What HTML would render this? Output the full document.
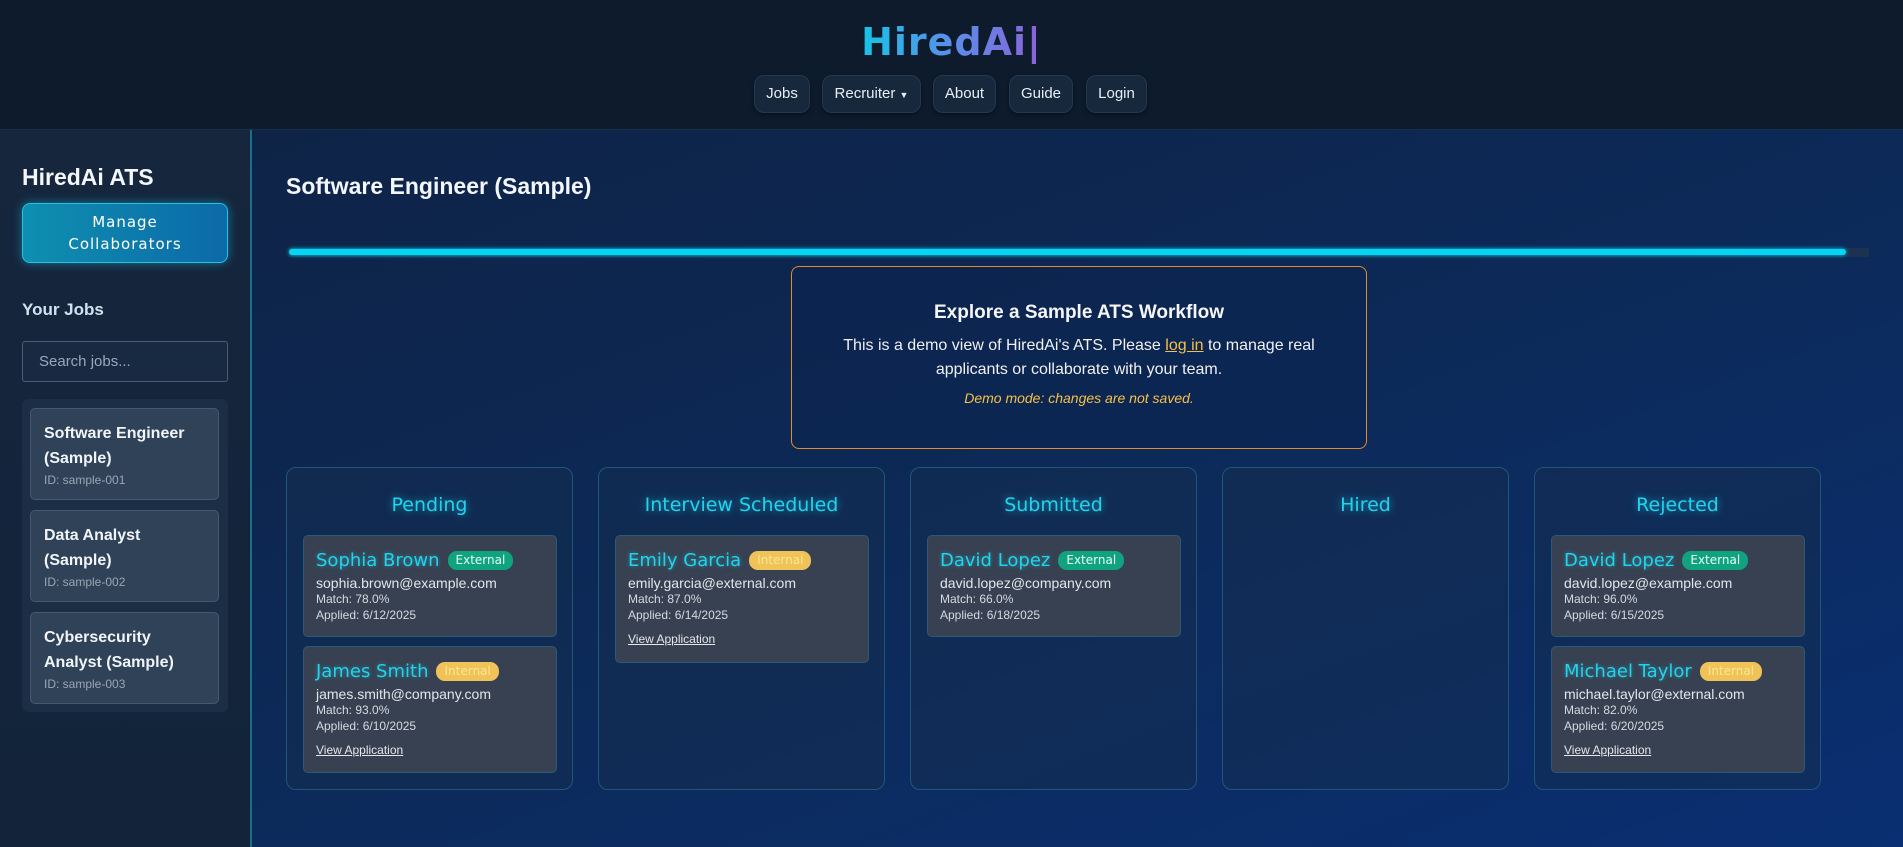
<!DOCTYPE html>
<html><head><meta charset="utf-8"><style>
*{box-sizing:border-box;margin:0;padding:0}
body{width:1903px;height:847px;overflow:hidden;font-family:"Liberation Sans",sans-serif;background:linear-gradient(160deg,#0f2140 0%,#0c2a5a 60%,#0a2f72 100%);position:relative;color:#fff}
.abs{position:absolute}
header{position:absolute;left:0;top:0;width:1903px;height:130px;background:#0d1b2d;border-bottom:1px solid #16304a}
.logo{position:absolute;left:0;width:1903px;top:20px;text-align:center;font-family:"DejaVu Sans",sans-serif;font-size:38px;font-weight:bold;letter-spacing:1px}
.logo span{background:linear-gradient(90deg,#17c3e6,#5b8ee8,#8b62d9);-webkit-background-clip:text;background-clip:text;color:transparent}
.nav{position:absolute;top:75px;height:38px;background:#17283d;border:1px solid #24384f;border-radius:10px;color:#e6eef6;font-size:15px;line-height:36px;text-align:center;box-shadow:0 2px 4px rgba(0,0,0,.4)}
.side{position:absolute;left:0;top:130px;width:252px;height:717px;background:linear-gradient(180deg,#15263d,#12233a);border-right:2px solid #1b6f8a}
.orb{font-family:"DejaVu Sans",sans-serif}
.jc{position:absolute;left:30px;width:189px;height:92px;background:#2f4258;border:1px solid #46586c;border-radius:5px;padding:12px 13px}
.jc b{display:block;font-size:16px;line-height:25px;color:#f1f5f9}
.jc i{font-style:normal;font-size:12px;color:#9aa6b4;display:block;margin-top:2px}
.col{position:absolute;top:467px;width:287px;height:323px;background:rgba(20,45,80,.55);border:1px solid #1f5777;border-radius:10px}
.col h3{position:absolute;top:26px;width:100%;text-align:center;font-family:"DejaVu Sans",sans-serif;font-weight:normal;font-size:19px;color:#22d3ee;text-shadow:0 0 8px rgba(34,211,238,.7)}
.cc{position:absolute;left:16px;width:254px;background:#374151;border:1px solid #2b5a78;border-radius:5px;padding:12px 12px 0 12px;color:#e5e7eb}
.cc .n{font-family:"DejaVu Sans",sans-serif;font-size:18px;color:#22d3ee;text-shadow:0 0 5px rgba(34,211,238,.5);display:flex;align-items:center;height:24px}
.tag{font-size:12px;border-radius:9px;padding:2px 8px;margin-left:8px;text-shadow:none;line-height:15px}
.ext{background:#10a37f;color:#e8fff6}
.int{background:#f0c35a;color:#fde68a}
.cc .e{font-size:14px;margin-top:3px;color:#e2e6ea}
.cc .m{font-size:12px;color:#d6dae0;line-height:16px}
.cc .v{font-size:12px;text-decoration:underline;margin-top:9px;display:block;color:#e5e7eb}
</style></head><body>
<header>
<div class="logo"><span>HiredAi|</span></div>
<div class="nav" style="left:754px;width:56px">Jobs</div>
<div class="nav" style="left:822px;width:99px">Recruiter <span style="font-size:9px">▼</span></div>
<div class="nav" style="left:933px;width:63px">About</div>
<div class="nav" style="left:1009px;width:64px">Guide</div>
<div class="nav" style="left:1086px;width:61px">Login</div>
</header>
<div class="side">
<div class="abs" style="left:22px;top:34px;font-size:23px;font-weight:bold;color:#f3f6fa">HiredAi ATS</div>
<div class="abs orb" style="left:22px;top:73px;width:206px;height:60px;background:linear-gradient(90deg,#0e8fb0,#0c6aa8);border:1px solid #22c4e6;border-radius:8px;box-shadow:0 0 10px rgba(34,196,230,.5);text-align:center;font-size:15px;line-height:22px;padding-top:7px;letter-spacing:1px">Manage<br>Collaborators</div>
<div class="abs" style="left:22px;top:170px;font-size:17px;font-weight:bold;color:#cfe2f0">Your Jobs</div>
<div class="abs" style="left:22px;top:211px;width:206px;height:41px;border:1px solid #4a5d72;border-radius:3px;background:#172a42;color:#9aa8b8;font-size:15px;line-height:39px;padding-left:16px">Search jobs...</div>
<div class="abs" style="left:22px;top:269px;width:206px;height:313px;background:#1b2e46;border-radius:6px"></div>
</div>
<div class="jc" style="top:408px"><b>Software Engineer (Sample)</b><i>ID: sample-001</i></div>
<div class="jc" style="top:510px"><b>Data Analyst (Sample)</b><i>ID: sample-002</i></div>
<div class="jc" style="top:612px"><b>Cybersecurity Analyst (Sample)</b><i>ID: sample-003</i></div>

<div class="abs" style="left:286px;top:173px;font-size:23px;font-weight:bold;color:#f3f6fa">Software Engineer (Sample)</div>
<div class="abs" style="left:289px;top:248px;width:1580px;height:9px;background:#1d3150"></div>
<div class="abs" style="left:289px;top:249px;width:1557px;height:6px;background:#06d6f5;border-radius:3px;box-shadow:0 0 4px #06d6f5"></div>

<div class="abs" style="left:791px;top:266px;width:576px;height:183px;border:1px solid #e58a2e;border-radius:8px;background:rgba(12,36,80,.6);text-align:center">
<div style="margin-top:35px;font-size:19px;font-weight:bold;color:#f5f5f5">Explore a Sample ATS Workflow</div>
<div style="margin:10px auto 0;width:500px;font-size:16px;line-height:24px;color:#f0f0f0">This is a demo view of HiredAi's ATS. Please <span style="color:#f5c04a;text-decoration:underline">log in</span> to manage real applicants or collaborate with your team.</div>
<div style="margin-top:8px;font-size:14px;font-style:italic;color:#f5c04a">Demo mode: changes are not saved.</div>
</div>

<div class="col" style="left:286px"><h3>Pending</h3>
<div class="cc" style="top:67px;height:102px"><div class="n">Sophia Brown<span class="tag ext">External</span></div><div class="e">sophia.brown@example.com</div><div class="m">Match: 78.0%</div><div class="m">Applied: 6/12/2025</div></div>
<div class="cc" style="top:178px;height:127px"><div class="n">James Smith<span class="tag int">Internal</span></div><div class="e">james.smith@company.com</div><div class="m">Match: 93.0%</div><div class="m">Applied: 6/10/2025</div><span class="v">View Application</span></div>
</div>
<div class="col" style="left:598px"><h3>Interview Scheduled</h3>
<div class="cc" style="top:67px;height:128px"><div class="n">Emily Garcia<span class="tag int">Internal</span></div><div class="e">emily.garcia@external.com</div><div class="m">Match: 87.0%</div><div class="m">Applied: 6/14/2025</div><span class="v">View Application</span></div>
</div>
<div class="col" style="left:910px"><h3>Submitted</h3>
<div class="cc" style="top:67px;height:102px"><div class="n">David Lopez<span class="tag ext">External</span></div><div class="e">david.lopez@company.com</div><div class="m">Match: 66.0%</div><div class="m">Applied: 6/18/2025</div></div>
</div>
<div class="col" style="left:1222px"><h3>Hired</h3></div>
<div class="col" style="left:1534px"><h3>Rejected</h3>
<div class="cc" style="top:67px;height:102px"><div class="n">David Lopez<span class="tag ext">External</span></div><div class="e">david.lopez@example.com</div><div class="m">Match: 96.0%</div><div class="m">Applied: 6/15/2025</div></div>
<div class="cc" style="top:178px;height:127px"><div class="n">Michael Taylor<span class="tag int">Internal</span></div><div class="e">michael.taylor@external.com</div><div class="m">Match: 82.0%</div><div class="m">Applied: 6/20/2025</div><span class="v">View Application</span></div>
</div>
</body></html>
